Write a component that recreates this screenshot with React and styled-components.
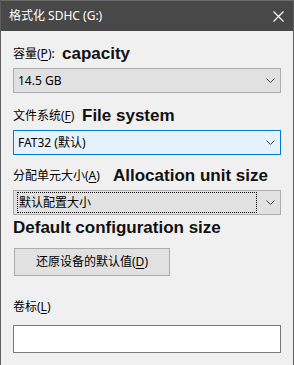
import React from 'react';
import styled, { createGlobalStyle } from 'styled-components';

const GlobalStyle = createGlobalStyle`
    html, body {
        margin: 0;
        padding: 0;
        background: #f0f0f0;
    }
    * {
        box-sizing: border-box;
    }
`;

const Window = styled.div`
    width: 294px;
    height: 365px;
    display: flex;
    flex-direction: column;
    background: #f0f0f0;
    border-left: 1px solid #5c5c5c;
    border-right: 1px solid #5c5c5c;
    font-family: "Noto Sans", "Noto Sans CJK SC", sans-serif;
    font-size: 12px;
    color: #000;
    overflow: hidden;
`;

const TitleBar = styled.div`
    height: 31px;
    flex: none;
    display: flex;
    align-items: center;
    justify-content: space-between;
    padding: 0 9px 0 8px;
    background: #484848;
    color: #fff;
    border-top: 1px solid #6a6a6a;
`;

const Title = styled.span`
    font-size: 12px;
    line-height: 16px;
`;

const Body = styled.div`
    display: flex;
    flex-direction: column;
    padding: 0 12px;
`;

const LabelRow = styled.div`
    height: 18px;
    margin-top: ${p => p.$top}px;
    display: flex;
    align-items: center;
    white-space: nowrap;
`;

const Label = styled.span`
    flex: none;
    width: ${p => (p.$w ? `${p.$w}px` : 'auto')};
    font-size: 12px;
    line-height: 16px;
`;

const Key = styled.span`
    text-decoration: underline;
    text-underline-offset: 2px;
`;

// English annotations pasted over the dialog
const Note = styled.span`
    font-family: "Liberation Sans", Arial, sans-serif;
    font-weight: bold;
    font-size: 17px;
    line-height: 20px;
    color: #111;
`;

const NoteRow = styled.div`
    height: 20px;
    margin-top: ${p => p.$top}px;
    display: flex;
    align-items: center;
    white-space: nowrap;
`;

const Combo = styled.div`
    height: 25px;
    width: 268px;
    margin-top: 5px;
    display: flex;
    align-items: center;
    justify-content: space-between;
    padding: 0 5px 0 4px;
    border: 1px solid ${p => (p.$hover ? '#0078d7' : '#adadad')};
    background: ${p => (p.$hover ? '#e5f1fb' : '#e1e1e1')};
`;

const ComboText = styled.span`
    flex: 1;
    height: 19px;
    display: flex;
    align-items: center;
    padding-left: ${p => (p.$focus ? 1 : 0)}px;
    margin-right: 10px;
    outline: ${p => (p.$focus ? '1px dotted #000' : 'none')};
    outline-offset: 0;
    line-height: 16px;
`;

const Chevron = () => (
    <svg width="9" height="5" viewBox="0 0 9 5">
        <path d="M0.5 0.5 L4.5 4.5 L8.5 0.5" fill="none" stroke="#444" strokeWidth="1" />
    </svg>
);

const Button = styled.div`
    width: 156px;
    height: 28px;
    margin: 10px 0 0 1px;
    display: flex;
    align-items: center;
    justify-content: center;
    border: 1px solid #adadad;
    background: #e1e1e1;
    line-height: 16px;
`;

const TextInput = styled.div`
    width: 268px;
    height: 28px;
    margin-top: 9px;
    border: 1px solid #7a7a7a;
    background: #fff;
`;

const CloseIcon = () => (
    <svg width="11" height="11" viewBox="0 0 11 11">
        <path d="M0.5 0.5 L10.5 10.5 M10.5 0.5 L0.5 10.5" stroke="#fff" strokeWidth="1.2" />
    </svg>
);

export default function App() {
    return (
        <>
            <GlobalStyle />
            <Window>
                <TitleBar>
                    <Title>格式化 SDHC (G:)</Title>
                    <CloseIcon />
                </TitleBar>
                <Body>
                    <LabelRow $top={14}>
                        <Label $w={49}>容量(<Key>P</Key>):</Label>
                        <Note>capacity</Note>
                    </LabelRow>
                    <Combo>
                        <ComboText>14.5 GB</ComboText>
                        <Chevron />
                    </Combo>

                    <LabelRow $top={14}>
                        <Label $w={69}>文件系统(<Key>F</Key>)</Label>
                        <Note>File system</Note>
                    </LabelRow>
                    <Combo $hover>
                        <ComboText>FAT32 (默认)</ComboText>
                        <Chevron />
                    </Combo>

                    <LabelRow $top={12}>
                        <Label $w={100}>分配单元大小(<Key>A</Key>)</Label>
                        <Note>Allocation unit size</Note>
                    </LabelRow>
                    <Combo>
                        <ComboText $focus>默认配置大小</ComboText>
                        <Chevron />
                    </Combo>
                    <NoteRow $top={3}>
                        <Note>Default configuration size</Note>
                    </NoteRow>

                    <Button>还原设备的默认值(<Key>D</Key>)</Button>

                    <LabelRow $top={22}>
                        <Label>卷标(<Key>L</Key>)</Label>
                    </LabelRow>
                    <TextInput />
                </Body>
            </Window>
        </>
    );
}
